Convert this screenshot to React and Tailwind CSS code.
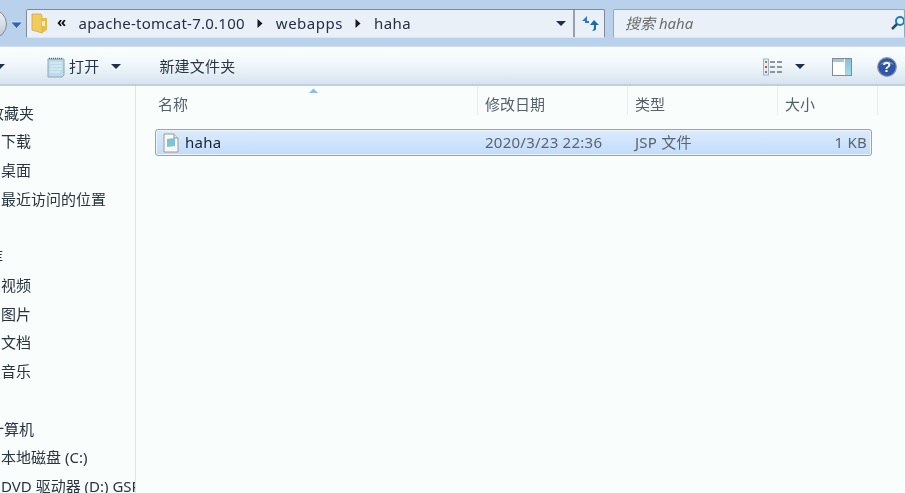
const font = { fontFamily: '"Noto Sans", "Noto Sans CJK SC", sans-serif' };

function Tri({ className = "" }) {
  return (
    <svg width="10" height="5" viewBox="0 0 10 5" className={className}>
      <path d="M0 0H10L5 5Z" fill="#1c3150" />
    </svg>
  );
}

function Sep() {
  return (
    <svg width="6" height="9" viewBox="0 0 6 9" className="mx-[12.5px] shrink-0">
      <path d="M0.5 0L5.5 4.5L0.5 9Z" fill="#1a1a1a" />
    </svg>
  );
}

function NavBar() {
  return (
    <div className="h-[47px] shrink-0 flex items-center bg-[#b9d1ea] border-b border-[#cfdeee]">
      <div className="w-[30px] h-[30px] -ml-[23px] mt-[2px] rounded-full border border-[#7e8a97] bg-gradient-to-b from-[#f4f6f9] to-[#bcc6d1] shrink-0" />
      <svg width="13" height="8" viewBox="0 0 13 8" className="ml-[3px] mt-[3px] shrink-0">
        <path d="M0.5 1H12.5L6.5 7.5Z" fill="#2c67b0" stroke="#dfeeff" strokeWidth="0.8" />
      </svg>
      <div className="ml-[3px] w-[579px] h-[29px] flex items-center border border-[#7f8a96] border-b-[#dbe4ef] rounded-[2px] bg-[#e9f0f8] shrink-0 tracking-[0.25px]">
        <svg width="17" height="23" viewBox="0 0 17 23" className="ml-[4px] shrink-0">
          <path d="M1 2H10L11 4V21L1 18Z" fill="#f0cc5e" stroke="#c8a23e" strokeWidth="0.7" />
          <path d="M11 6H16V18L11 21Z" fill="#e6bc4d" />
          <path d="M11 9H14V14H11Z" fill="#fbeeb0" />
        </svg>
        <span className="ml-[9px] text-[15px] font-bold text-[#111] leading-none -mt-[3px]">«</span>
        <span className="ml-[12px] text-[#263042] text-[15px] leading-none">apache-tomcat-7.0.100</span>
        <Sep />
        <span className="text-[#263042] text-[15px] leading-none tracking-[0.5px]">webapps</span>
        <Sep />
        <span className="text-[#263042] text-[15px] leading-none tracking-[0.5px]">haha</span>
        <Tri className="ml-auto mr-[7px] shrink-0" />
        <div className="w-[31px] h-full border-l-2 border-[#98a1ab] flex items-center justify-center shrink-0">
          <svg width="18" height="16" viewBox="0 0 18 16">
            <path d="M6 1L1 6H4V8H8V6H6Z" fill="#2d79c4" />
            <path d="M13 5L18 10H15V14C15 15 13 16 11 16C12 15 13 14 13 12V10H9Z" fill="#1f67b0" />
          </svg>
        </div>
      </div>
      <div className="ml-[8px] flex-1 h-[29px] flex items-center border border-[#9aa6b2] border-b-[#dbe4ef] rounded-[2px] bg-[#e9f0f8] overflow-hidden">
        <span className="ml-[11px] text-[15px] italic text-[#6c6c6c] leading-none">搜索 haha</span>
        <svg width="14" height="16" viewBox="0 0 14 16" className="ml-auto shrink-0 -mr-[1px]">
          <circle cx="9" cy="6" r="4" fill="#eaf5ff" stroke="#1c7ec2" strokeWidth="2" />
          <path d="M6 9L1 14" stroke="#23497e" strokeWidth="2.5" />
        </svg>
      </div>
    </div>
  );
}

function Toolbar() {
  return (
    <div className="h-[39px] shrink-0 flex items-center pt-[2px] bg-gradient-to-b from-[#fbfefe] via-[#eff6fa] to-[#d6e3ef] border-b-2 border-[#bccfe3] text-[15px] text-[#283646] tracking-[0.2px]">
      <Tri className="-ml-[5px] shrink-0" />
      <svg width="20" height="22" viewBox="0 0 20 22" className="ml-[41px] shrink-0">
        <path d="M2 3H18V19L16 21H2Z" fill="#bcdcec" stroke="#8ea6b4" strokeWidth="1" />
        <path d="M4 7H16M4 10H16M4 13H16M4 16H14" stroke="#e4f2f8" strokeWidth="1" />
        <path d="M3 2.5H17" stroke="#606a72" strokeWidth="1.4" strokeDasharray="1 1" />
      </svg>
      <span className="ml-[3px] leading-none">打开</span>
      <Tri className="ml-[12px] shrink-0" />
      <span className="ml-[38px] leading-none">新建文件夹</span>
      <svg width="20" height="18" viewBox="0 0 20 18" className="ml-auto shrink-0">
        <rect x="0.5" y="1" width="5" height="16" fill="#e6edf2" stroke="#a5b2bd" />
        <rect x="2" y="3" width="2" height="2" fill="#6a9b62" />
        <rect x="2" y="8" width="2" height="2" fill="#c8504a" />
        <rect x="2" y="13" width="2" height="2" fill="#5c86b8" />
        <path d="M7 4H12M14 4H19M7 9H12M14 9H19M7 14H12M14 14H19" stroke="#6e7780" strokeWidth="1.4" />
      </svg>
      <Tri className="ml-[12px] shrink-0" />
      <div className="ml-[27px] w-[20px] h-[18px] flex border border-[#7f8c98] bg-white shrink-0">
        <div className="w-[11px] flex flex-col">
          <div className="h-[3px] bg-[#a9c3da]" />
        </div>
        <div className="flex-1 ml-px bg-gradient-to-b from-[#7fc4d8] to-[#a7dbe8]" />
      </div>
      <svg width="20" height="20" viewBox="0 0 20 20" className="ml-[25px] mr-[8px] shrink-0">
        <circle cx="10" cy="10" r="9.3" fill="#2f56a6" stroke="#8d97a6" strokeWidth="1.2" />
        <path d="M3 8C6 3 14 3 17 8C13 6 7 6 3 8Z" fill="#6f8fd0" />
        <text x="10" y="15" textAnchor="middle" fontSize="14" fontWeight="700" fill="#fff" fontFamily="Liberation Sans, sans-serif">?</text>
      </svg>
    </div>
  );
}

function NavRow({ children, cut = "ml-px" }) {
  return (
    <div className="h-[28.7px] flex items-center whitespace-nowrap">
      <span className={cut}>{children}</span>
    </div>
  );
}

function Sidebar() {
  return (
    <div className="w-[136px] shrink-0 border-r border-[#d8e6f0] overflow-hidden pt-[12.5px] text-[15px] text-[#2a3440]">
      <NavRow cut="-ml-[11px]">收藏夹</NavRow>
      <NavRow>下载</NavRow>
      <NavRow>桌面</NavRow>
      <NavRow>最近访问的位置</NavRow>
      <div className="h-[29px]" />
      <NavRow cut="-ml-[12px]">库</NavRow>
      <NavRow>视频</NavRow>
      <NavRow>图片</NavRow>
      <NavRow>文档</NavRow>
      <NavRow>音乐</NavRow>
      <div className="h-[29px]" />
      <NavRow cut="-ml-[11px]">计算机</NavRow>
      <NavRow>本地磁盘 (C:)</NavRow>
      <NavRow>DVD 驱动器 (D:) GSP1RMCPRXFREO_CN_DVD</NavRow>
    </div>
  );
}

function Head({ w, children, first }) {
  return (
    <div className={"h-[29px] shrink-0 flex items-center pt-[7px] border-r border-[#e4eef5] relative " + w}>
      <span className="ml-[7px] text-[15px] text-[#56606c] leading-none">{children}</span>
      {first && (
        <svg width="9" height="5" viewBox="0 0 9 5" className="absolute left-[158px] top-[2px]">
          <path d="M0 5L4.5 0.5L9 5Z" fill="#8fbde0" />
        </svg>
      )}
    </div>
  );
}

function FileList() {
  return (
    <div className="flex-1 min-w-0">
      <div className="flex pl-[15px] h-[36px]">
        <Head w="w-[327px]" first>名称</Head>
        <Head w="w-[150px]">修改日期</Head>
        <Head w="w-[150px]">类型</Head>
        <Head w="w-[100px]">大小</Head>
      </div>
      <div className="ml-[19px] mt-[7px] w-[717px] h-[27px] flex items-center border border-[#7fa9d2] rounded-[3px] bg-gradient-to-b from-[#dcebfc] to-[#c1dcfa] text-[15px] tracking-[0.25px] text-[#5b6470] shadow-[inset_0_0_0_1px_#eef5fd]">
        <svg width="16" height="20" viewBox="0 0 16 20" className="ml-[7px] shrink-0">
          <path d="M1 1H11L15 5V19H1Z" fill="#f8f8f6" stroke="#9a9a96" />
          <path d="M11 1V5H15" fill="#e6e6e2" stroke="#9a9a96" />
          <path d="M4 6L12 5V13L4 14Z" fill="#7cc3d6" />
        </svg>
        <span className="ml-[6px] w-[300px] text-[#1a2433] shrink-0">haha</span>
        <span className="w-[150px] shrink-0">2020/3/23 22:36</span>
        <span className="shrink-0">JSP 文件</span>
        <span className="ml-auto mr-[4px]">1 KB</span>
      </div>
    </div>
  );
}

export default function App() {
  return (
    <div className="w-[905px] h-[493px] overflow-hidden bg-[#f9fdfb]">
      <div className="w-[905px] h-[493px] flex flex-col bg-[#f9fdfb] blur-[0.35px]" style={font}>
        <NavBar />
        <Toolbar />
        <div className="flex-1 min-h-0 flex">
          <Sidebar />
          <FileList />
        </div>
      </div>
    </div>
  );
}
